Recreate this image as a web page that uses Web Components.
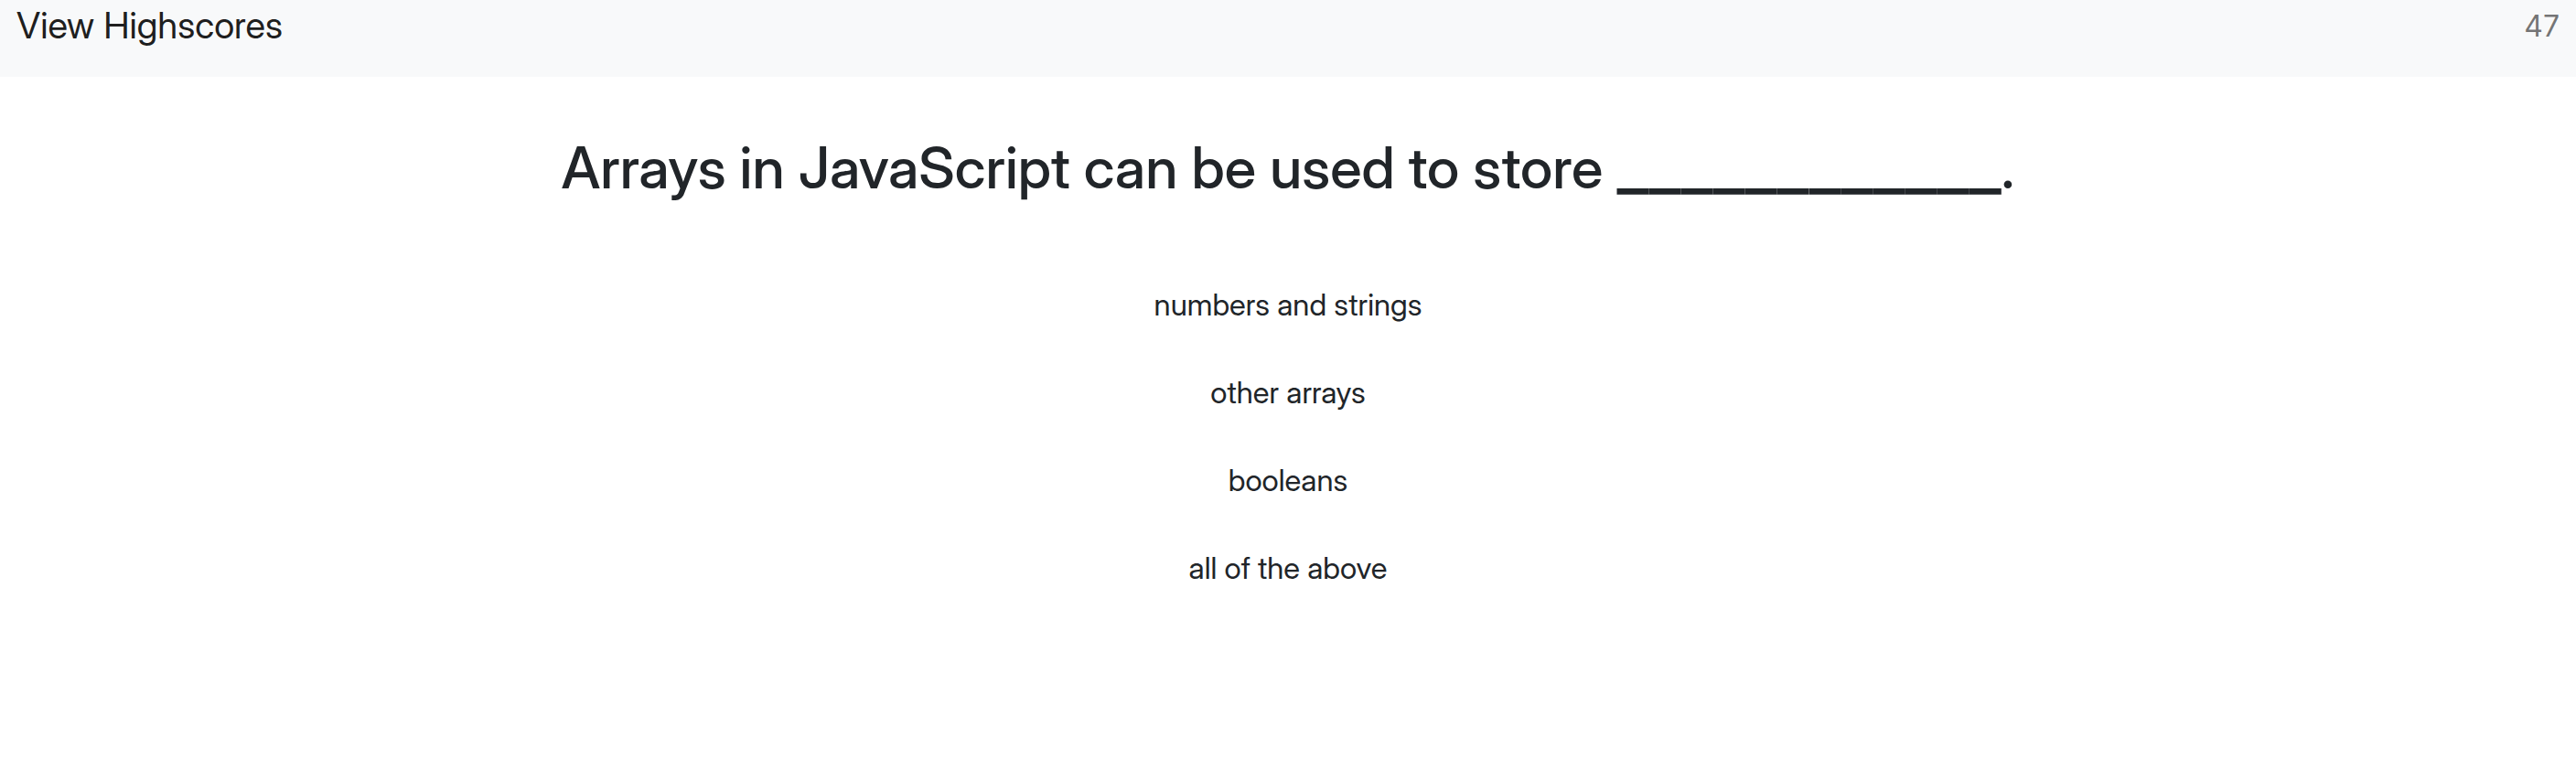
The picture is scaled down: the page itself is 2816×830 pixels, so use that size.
<!DOCTYPE html>
<html lang="en">
<head>
<meta charset="utf-8">
<title>Code Quiz</title>
<style>
body { margin: 0; background: #fff; color: #212529; font-family: "Inter Display", Inter, "Liberation Sans", sans-serif; }
</style>
</head>
<body>
<quiz-app></quiz-app>
<script>
class QuizNav extends HTMLElement {
  constructor() {
    super();
    this.attachShadow({ mode: "open" }).innerHTML = `
      <style>
        :host { display: flex; justify-content: space-between; align-items: flex-start; padding: 0 18px 26px; background: #f8f9fa; }
        a { color: rgba(0, 0, 0, .9); text-decoration: none; font-size: 40px; line-height: 56px; }
        span { color: rgba(0, 0, 0, .55); font-family: Inter, sans-serif; font-size: 32px; line-height: 58px; }
      </style>
      <a href="#highscores">View Highscores</a>
      <span><slot name="time"></slot></span>`;
  }
}
customElements.define("quiz-nav", QuizNav);

class QuizChoice extends HTMLElement {
  constructor() {
    super();
    this.attachShadow({ mode: "open" }).innerHTML = `
      <style>
        :host { display: block; }
        button { font: inherit; font-size: 33px; line-height: 48px; color: #212529; background: none; border: 0; padding: 12px 24px; }
      </style>
      <button type="button"><slot></slot></button>`;
  }
}
customElements.define("quiz-choice", QuizChoice);

class QuizApp extends HTMLElement {
  constructor() {
    super();
    this.attachShadow({ mode: "open" }).innerHTML = `
      <style>
        :host { display: block; }
        main { display: flex; flex-direction: column; align-items: center; padding: 61px 24px; }
        h1 { margin: 0 0 76px; font-size: 63px; line-height: 76px; font-weight: 500; text-align: center; }
        .blank { font-size: 76px; line-height: 1px; }
        section { display: flex; flex-direction: column; align-items: center; gap: 24px; }
      </style>
      <quiz-nav><span slot="time">47</span></quiz-nav>
      <main>
        <h1>Arrays in JavaScript can be used to store <span class="blank">____________</span>.</h1>
        <section>
          <quiz-choice>numbers and strings</quiz-choice>
          <quiz-choice>other arrays</quiz-choice>
          <quiz-choice>booleans</quiz-choice>
          <quiz-choice>all of the above</quiz-choice>
        </section>
      </main>`;
  }
}
customElements.define("quiz-app", QuizApp);
</script>
</body>
</html>
